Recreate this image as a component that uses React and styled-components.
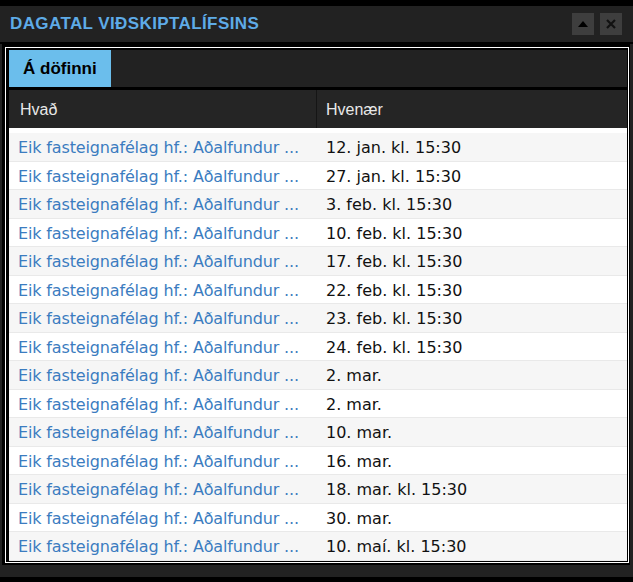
import React from 'react';
import styled, { createGlobalStyle } from 'styled-components';

const dates = [
  '12. jan. kl. 15:30',
  '27. jan. kl. 15:30',
  '3. feb. kl. 15:30',
  '10. feb. kl. 15:30',
  '17. feb. kl. 15:30',
  '22. feb. kl. 15:30',
  '23. feb. kl. 15:30',
  '24. feb. kl. 15:30',
  '2. mar.',
  '2. mar.',
  '10. mar.',
  '16. mar.',
  '18. mar. kl. 15:30',
  '30. mar.',
  '10. maí. kl. 15:30',
];

const events = dates.map((when, i) => ({
  id: i,
  what: 'Eik fasteignafélag hf.: Aðalfundur ...',
  when,
}));

const GlobalStyle = createGlobalStyle`
  html, body {
    margin: 0;
    padding: 0;
    background: #000;
  }
  * {
    box-sizing: border-box;
  }
`;

const Window = styled.div`
  width: 633px;
  height: 582px;
  background: #222;
  border-top: 6px solid #000;
  border-bottom: 5px solid #000;
  display: flex;
  flex-direction: column;
`;

const TitleBar = styled.div`
  height: 36px;
  flex: none;
  display: flex;
  align-items: center;
  justify-content: space-between;
  padding: 0 11px 0 10px;
  border-bottom: 2px solid #000;
  box-sizing: content-box;
`;

const Title = styled.h1`
  margin: 0;
  font-family: 'Liberation Sans', Arial, sans-serif;
  font-weight: 700;
  font-size: 17px;
  letter-spacing: 0.4px;
  color: #5eabe7;
  text-transform: uppercase;
`;

const Controls = styled.div`
  display: flex;
  gap: 6px;
  margin-top: -1px;
`;

const IconButton = styled.button`
  width: 22px;
  height: 22px;
  padding: 0;
  border: none;
  background: #3e3e3e;
  display: flex;
  align-items: center;
  justify-content: center;
  cursor: pointer;
`;

const Body = styled.div`
  flex: 1;
  display: flex;
  padding: 0 3px 12px 2px;
`;

const Panel = styled.div`
  flex: 1;
  display: flex;
  background: #000;
  padding: 3px 1px 2px 3px;
`;

const Frame = styled.div`
  flex: 1;
  display: flex;
  flex-direction: column;
  border: 1px solid #fff;
  background: #000;
  padding: 2px 1px 1px 3px;
`;

const TabBar = styled.div`
  height: 37px;
  flex: none;
  display: flex;
  background: #222;
`;

const Tab = styled.div`
  flex: none;
  display: flex;
  align-items: center;
  padding: 1px 14px 0;
  white-space: nowrap;
  background: ${(p) => (p.active ? '#6bbeec' : 'transparent')};
  color: #000;
  font-family: 'Liberation Sans', Arial, sans-serif;
  font-weight: 700;
  font-size: 17px;
`;

const Table = styled.div`
  flex: 1;
  display: flex;
  flex-direction: column;
  margin-top: 3px;
`;

const HeadRow = styled.div`
  height: 38px;
  flex: none;
  display: grid;
  grid-template-columns: 308px 1fr;
  background: #252525;
`;

const HeadCell = styled.div`
  display: flex;
  align-items: center;
  padding: 2px 0 0 ${(p) => (p.first ? '11px' : '9px')};
  font-family: 'Liberation Sans', Arial, sans-serif;
  font-size: 16px;
  color: #e8e8e8;
  border-right: ${(p) => (p.first ? '1px solid #151515' : 'none')};
`;

const Rows = styled.div`
  flex: 1;
  background: #fff;
  padding-top: 5px;
`;

const Row = styled.div`
  height: 28.5px;
  display: grid;
  grid-template-columns: 308px 1fr;
  align-items: center;
  padding-top: 2px;
  background: ${(p) => (p.odd ? '#f6f6f6' : '#fff')};
  border-bottom: 1px solid #e9e9e9;
  font-family: 'DejaVu Sans', Verdana, sans-serif;
  font-size: 16px;
`;

const WhatCell = styled.a`
  padding-left: 9px;
  color: #3b7cc0;
  text-decoration: none;
  white-space: nowrap;
  overflow: hidden;
  letter-spacing: -0.15px;
`;

const WhenCell = styled.span`
  padding-left: 9px;
  color: #111;
  white-space: nowrap;
`;

const UpIcon = () => (
  <svg width="10" height="6" viewBox="0 0 10 6">
    <path d="M5 0 L10 6 L0 6 Z" fill="#000" />
  </svg>
);

const CloseIcon = () => (
  <svg width="10" height="10" viewBox="0 0 10 10">
    <path d="M1 1 L9 9 M9 1 L1 9" stroke="#111" strokeWidth="2.2" />
  </svg>
);

export default function App() {
  return (
    <>
      <GlobalStyle />
      <Window>
        <TitleBar>
          <Title>Dagatal viðskiptalífsins</Title>
          <Controls>
            <IconButton aria-label="Minnka">
              <UpIcon />
            </IconButton>
            <IconButton aria-label="Loka">
              <CloseIcon />
            </IconButton>
          </Controls>
        </TitleBar>
        <Body>
          <Panel>
            <Frame>
              <TabBar>
                <Tab active>Á döfinni</Tab>
              </TabBar>
              <Table>
                <HeadRow>
                  <HeadCell first>Hvað</HeadCell>
                  <HeadCell>Hvenær</HeadCell>
                </HeadRow>
                <Rows>
                  {events.map((ev, i) => (
                    <Row key={ev.id} odd={i % 2 === 0}>
                      <WhatCell href="#">{ev.what}</WhatCell>
                      <WhenCell>{ev.when}</WhenCell>
                    </Row>
                  ))}
                </Rows>
              </Table>
            </Frame>
          </Panel>
        </Body>
      </Window>
    </>
  );
}
